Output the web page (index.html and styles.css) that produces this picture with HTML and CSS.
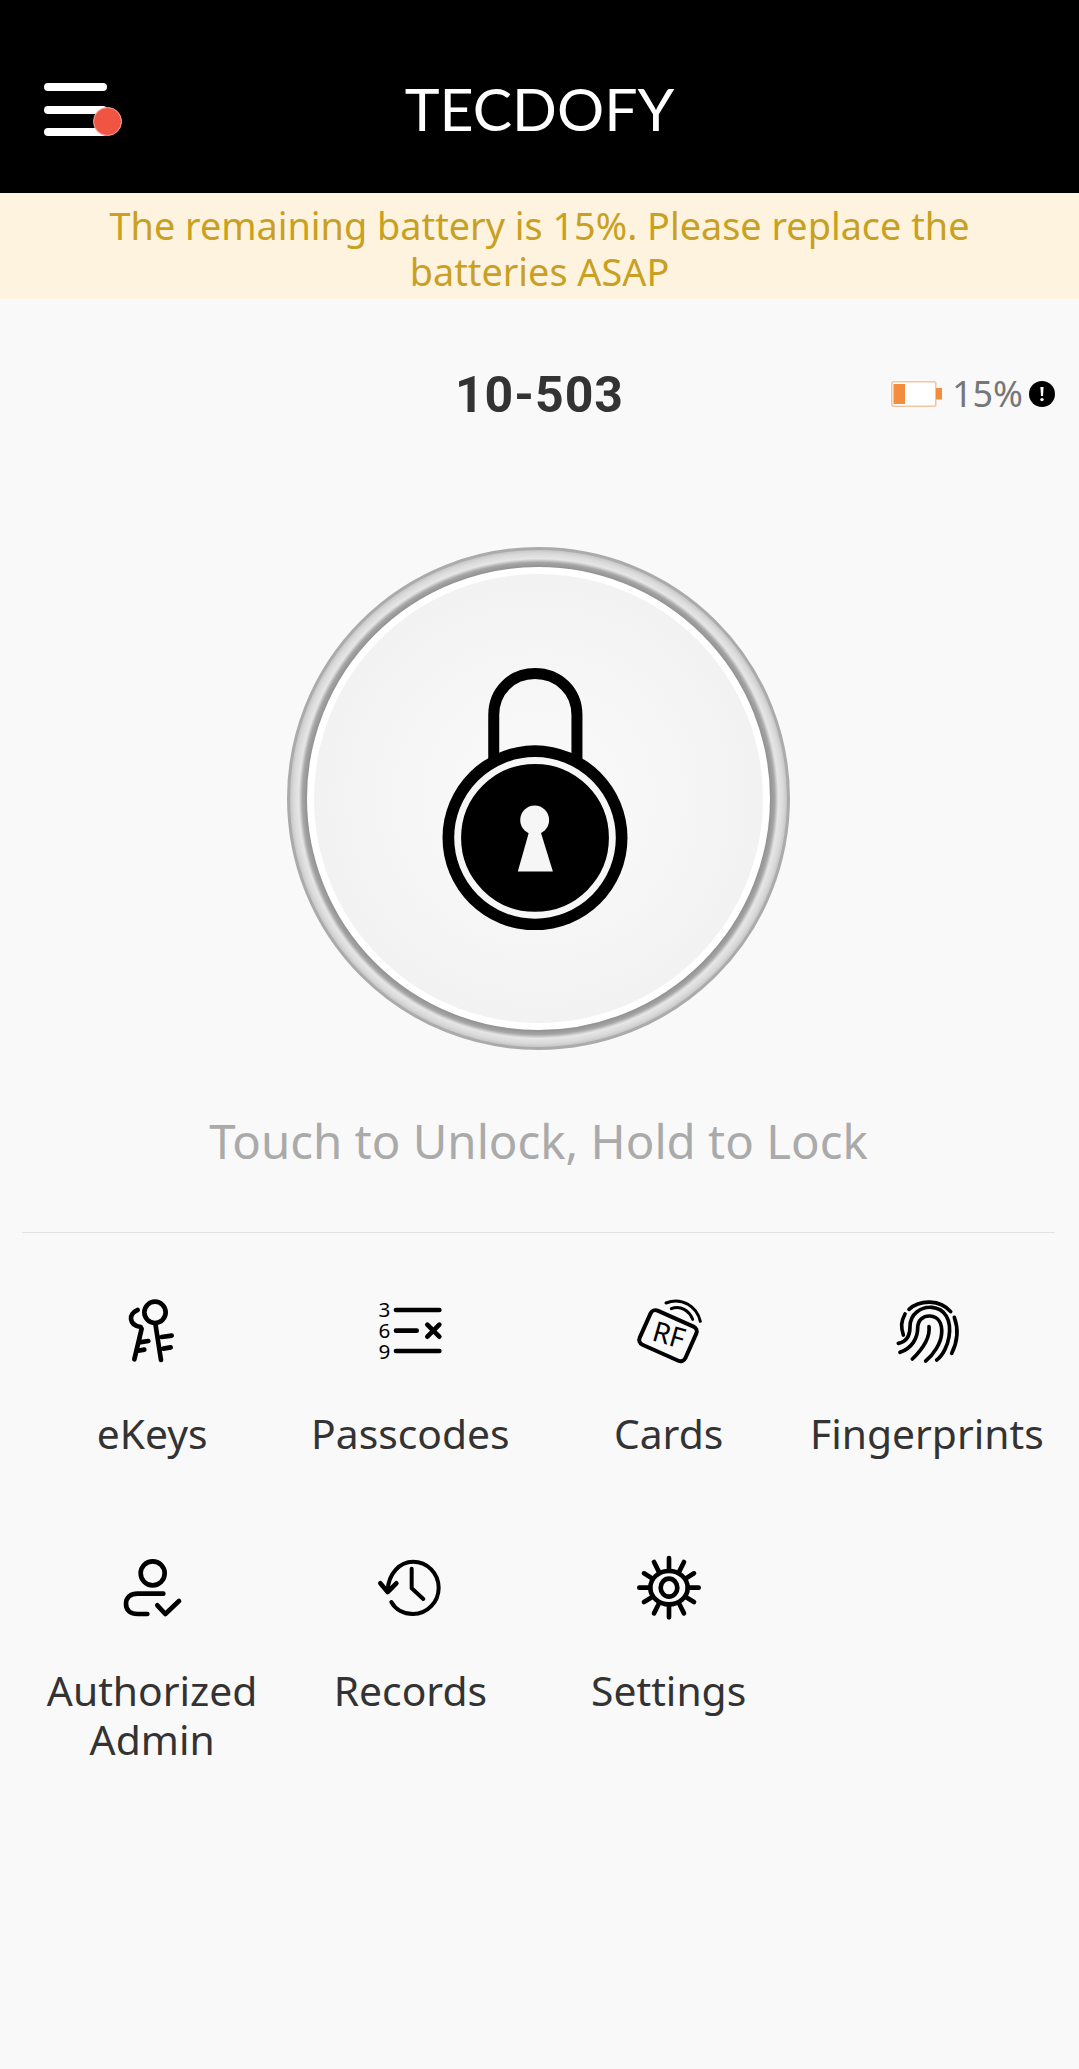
FILE: index.html
```html
<!DOCTYPE html>
<html lang="en">
<head>
    <meta charset="UTF-8">
    <meta name="viewport" content="width=device-width, initial-scale=1.0">
    <title>TECDOFY</title>
    <link rel="stylesheet" href="styles.css">
</head>
<body>
    <header class="topbar">
        <div class="menu">
            <span class="menu-bar"></span>
            <span class="menu-bar"></span>
            <span class="menu-bar"></span>
            <span class="menu-dot"></span>
        </div>
        <h1 class="brand">TECDOFY</h1>
    </header>

    <p class="notice">The remaining battery is 15%. Please replace the batteries ASAP</p>

    <section class="status">
        <h2 class="room">10-503</h2>
        <div class="battery">
            <svg class="battery-icon" viewBox="0 0 51 26">
                <rect x="0.8" y="0.8" width="44" height="24.4" rx="2" fill="#fff" stroke="#f3c6a2" stroke-width="1.6"/>
                <rect x="2.5" y="3" width="11.5" height="20" fill="#f28c3e"/>
                <rect x="45" y="7" width="6" height="11.5" fill="#f28c3e"/>
            </svg>
            <span class="battery-text">15%</span>
            <svg class="alert-icon" viewBox="0 0 26 26">
                <circle cx="13" cy="13" r="13" fill="#000"/>
                <path d="M11.4 6h3.2l-.6 9h-2z" fill="#fff"/>
                <circle cx="13" cy="18.6" r="1.7" fill="#fff"/>
            </svg>
        </div>
    </section>

    <section class="unlock">
        <div class="dial">
            <div class="dial-face">
                <!-- padlock -->
                <svg class="padlock" viewBox="498 398 540 762">
                    <path d="M648 680V535C648 465 700 414 768 414C836 414 890 465 890 535V680" fill="none" stroke="#000" stroke-width="32"/>
                    <circle cx="768" cy="892" r="269" fill="#000"/>
                    <circle cx="768" cy="892" r="225" fill="none" stroke="#f6f6f6" stroke-width="20"/>
                    <circle cx="767" cy="840" r="42" fill="#f6f6f6"/>
                    <path d="M752 870H783L820 990H718z" fill="#f6f6f6"/>
                </svg>
            </div>
        </div>
        <p class="hint">Touch to Unlock, Hold to Lock</p>
    </section>

    <nav class="features">
        <a class="feature">
            <svg class="feature-icon" viewBox="60 54 192 192">
                <circle cx="165" cy="97" r="32"/>
                <path d="M166 130L183 240M185 171L215 167M190 206L212 202"/>
                <path d="M113 90C85 100 85 135 122 141M125 146L103 238M118 187L145 183M110 213L133 209"/>
            </svg>
            <span class="feature-label">eKeys</span>
        </a>
        <a class="feature">
            <svg class="feature-icon" viewBox="834 54 192 192">
                <text class="digit"><tspan x="853" y="112">3</tspan><tspan x="853" y="174">6</tspan><tspan x="853" y="236">9</tspan></text>
                <path d="M888 90H1018M888 152H950M982 134L1018 170M1018 134L982 170M888 213H1018"/>
            </svg>
            <span class="feature-label">Passcodes</span>
        </a>
        <a class="feature">
            <svg class="feature-icon" viewBox="105 54 192 192">
                <rect class="thin" x="123" y="111" width="150" height="112" rx="16" transform="rotate(24 198 167)"/>
                <text class="rf" x="200" y="194" transform="rotate(16 198 167)">RF</text>
                <path class="fine" d="M192 69C240 50 285 80 295 124M208 86C235 75 262 92 272 118"/>
            </svg>
            <span class="feature-label">Cards</span>
        </a>
        <a class="feature">
            <svg class="feature-icon print" viewBox="880 54 192 192">
                <path d="M922 88C955 58 1015 58 1047 95"/>
                <path d="M910 102C898 125 897 140 905 165"/>
                <path d="M1058 112C1072 150 1065 190 1050 220"/>
                <path d="M890 190C915 185 925 165 925 140C925 100 960 80 990 82C1030 85 1050 120 1042 170C1038 195 1025 225 1005 240"/>
                <path d="M895 217C930 205 948 175 948 145C948 120 965 107 985 108C1010 110 1022 130 1020 160C1018 190 995 225 972 243"/>
                <path d="M982 140C985 165 975 195 932 237"/>
            </svg>
            <span class="feature-label">Fingerprints</span>
        </a>
        <a class="feature">
            <svg class="feature-icon" viewBox="60 45 192 192">
                <ellipse cx="158" cy="100" rx="36" ry="36"/>
                <path d="M190 161H113C92 161 78 172 78 192C78 212 92 222 113 222H142"/>
                <path d="M172 196L196 222L237 183"/>
            </svg>
            <span class="feature-label">Authorized Admin</span>
        </a>
        <a class="feature">
            <svg class="feature-icon" viewBox="834 45 192 192">
                <path class="thin" d="M863 150C866 100 900 65 939 65C982 65 1016 100 1016 143C1016 186 982 222 939 222C910 222 886 208 874 186"/>
                <path d="M841 130L863 156L889 130"/>
                <path class="thin" d="M935 86V145L970 177"/>
            </svg>
            <span class="feature-label">Records</span>
        </a>
        <a class="feature">
            <svg class="feature-icon" viewBox="1607 45 192 192">
                <ellipse cx="1703" cy="143" rx="25" ry="27"/>
                <ellipse cx="1703" cy="143" rx="56" ry="50"/>
                <path d="M1703 54V88M1703 198V232M1614 143H1646M1760 143H1792M1658 66L1672 94M1734 192L1748 220M1748 66L1734 94M1672 192L1658 220M1628 100L1654 116M1752 170L1778 186M1778 100L1752 116M1654 170L1628 186"/>
            </svg>
            <span class="feature-label">Settings</span>
        </a>
    </nav>
</body>
</html>
```

FILE: styles.css
```css
* {
    box-sizing: border-box;
}
body {
    margin: 0;
    min-height: 2069px;
    background-color: #f9f9f9;
    font-family: "Noto Sans", Lato, sans-serif;
    color: #333;
}
.topbar {
    height: 193px;
    padding: 24px 44px 0;
    background-color: #000;
    display: grid;
    grid-template-columns: 1fr auto 1fr;
    align-items: center;
}
.menu {
    position: relative;
    width: 63px;
    margin-top: 2px;
    display: flex;
    flex-direction: column;
    gap: 14.5px;
}
.menu-bar {
    display: block;
    height: 8px;
    border-radius: 4px;
    background-color: #fff;
}
.menu-dot {
    position: absolute;
    right: -15px;
    bottom: 0;
    width: 29px;
    height: 29px;
    border-radius: 50%;
    background-color: #f05442;
    border: 1px solid #f7a99e;
}
.brand {
    margin: 0;
    font-family: Lato, sans-serif;
    font-size: 59px;
    font-weight: 400;
    line-height: 70px;
    color: #fff;
}
.notice {
    margin: 0;
    padding: 10px 80px 0;
    height: 106px;
    background-color: #fef3de;
    color: #c9a021;
    font-size: 37.8px;
    line-height: 46px;
    text-align: center;
}
.status {
    padding-top: 67px;
    height: 125px;
    display: grid;
    grid-template-columns: 1fr auto 1fr;
    align-items: center;
}
.room {
    grid-column: 2;
    margin: 0;
    font-family: Roboto, sans-serif;
    font-size: 50px;
    font-weight: 700;
    letter-spacing: 1px;
    line-height: 58px;
    color: #333;
}
.battery {
    grid-column: 3;
    justify-self: end;
    margin: 0 24px 2px 0;
    display: flex;
    align-items: center;
}
.battery-icon {
    width: 51px;
    height: 26px;
    margin-right: 10px;
}
.battery-text {
    font-size: 36px;
    line-height: 46px;
    color: #777;
}
.alert-icon {
    width: 26px;
    height: 26px;
    margin-left: 6px;
}
.unlock {
    padding-top: 123px;
    border-bottom: 1px solid #e2e2e2;
    margin: 0 24px 0 22px;
    display: flex;
    flex-direction: column;
    align-items: center;
}
.dial {
    width: 503px;
    height: 503px;
    padding: 17px;
    border-radius: 50%;
    border: 3px solid #ababab;
    background: radial-gradient(circle closest-side, #8f8f8f 93%, #a5a5a5 95%, #e6e6e6 96.5%, #dadada 98.5%, #c6c6c6 100%);
}
.dial-face {
    width: 100%;
    height: 100%;
    border-radius: 50%;
    background: radial-gradient(circle closest-side, #f8f8f8 35%, #f2f2f2 100%);
    border: 7px solid #fff;
    display: flex;
    align-items: center;
    justify-content: center;
}
.padlock {
    width: 186px;
    height: 262px;
    margin-right: 8px;
}
.hint {
    margin: 61px 0;
    font-size: 47.4px;
    line-height: 60px;
    color: #aaa;
}
.features {
    margin: 0 23px;
    padding-top: 65px;
    display: grid;
    grid-template-columns: repeat(4, 1fr);
    row-gap: 97px;
}
.feature {
    display: flex;
    flex-direction: column;
    align-items: center;
    gap: 47px;
    text-align: center;
}
.feature-icon {
    width: 64px;
    height: 64px;
    overflow: visible;
    fill: none;
    stroke: #000;
    stroke-width: 14;
    stroke-linecap: round;
    stroke-linejoin: round;
}
.feature-icon.print {
    stroke-width: 11;
}
.feature-icon .thin {
    stroke-width: 12;
}
.feature-icon .fine {
    stroke-width: 9;
}
.digit {
    fill: #000;
    stroke: none;
    font-size: 62px;
    text-anchor: middle;
}
.rf {
    fill: #000;
    stroke: none;
    font-size: 84px;
    text-anchor: middle;
}
.feature-label {
    font-size: 40.8px;
    line-height: 49px;
    color: #333;
}
```
